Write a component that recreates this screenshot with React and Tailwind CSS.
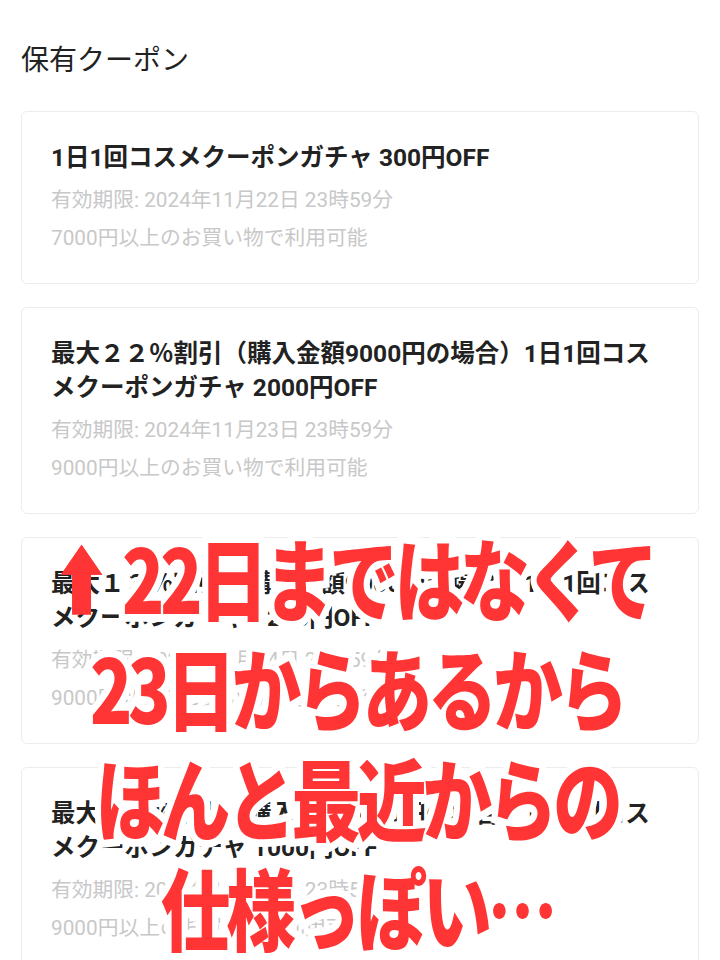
import React from 'react';

const coupons = [
  {
    title: '1日1回コスメクーポンガチャ 300円OFF',
    limit: '有効期限: 2024年11月22日 23時59分',
    cond: '7000円以上のお買い物で利用可能',
  },
  {
    title: '最大２２％割引（購入金額9000円の場合）1日1回コスメクーポンガチャ 2000円OFF',
    limit: '有効期限: 2024年11月23日 23時59分',
    cond: '9000円以上のお買い物で利用可能',
  },
  {
    title: '最大１３％割引（購入金額9000円の場合）1日1回コスメクーポンガチャ 1200円OFF',
    limit: '有効期限: 2024年11月24日 23時59分',
    cond: '9000円以上のお買い物で利用可能',
  },
  {
    title: '最大１１％割引（購入金額9000円の場合）1日1回コスメクーポンガチャ 1000円OFF',
    limit: '有効期限: 2024年11月25日 23時59分',
    cond: '9000円以上のお買い物で利用可能',
  },
];

const CouponCard = ({ title, limit, cond }) => (
  <div className="rounded-[6px] border border-[#ececec] bg-white px-[29px] pt-[29px] pb-[26px]">
    <p className="text-[24.5px] leading-[34px] font-bold text-[#222]">{title}</p>
    <p className="mt-[6px] text-[20.75px] leading-[38px] text-[#c8c8c8]">{limit}</p>
    <p className="text-[20.75px] leading-[38px] text-[#c8c8c8]">{cond}</p>
  </div>
);

// red caption with white outline: outline layer underneath, fill layer on top
const Caption = ({ children }) => (
  <div className="grid scale-x-[0.94] scale-y-[1.2]">
    <div className="[grid-area:1/1] text-white [-webkit-text-stroke:13px_white]">{children}</div>
    <div aria-hidden="true" className="[grid-area:1/1] text-[#ff3535]">{children}</div>
  </div>
);

const UpArrow = () => (
  <svg width="46" height="60" viewBox="0 0 46 60" className="inline-block align-baseline mr-[20px] -mb-[1px]">
    <path d="M23 1 L45 26 L33 26 L33 59 L13 59 L13 26 L1 26 Z" fill="#ff3535" />
  </svg>
);

export default function App() {
  return (
    <div className="relative min-h-screen bg-white px-[21px] pt-[41px] font-['Roboto','Noto_Sans_CJK_JP',sans-serif]">
      <h1 className="text-[28px] leading-[40px] text-[#222] mb-[30px]">保有クーポン</h1>

      <div className="flex flex-col gap-[23px]">
        {coupons.map((c) => (
          <CouponCard key={c.limit} {...c} />
        ))}
      </div>

      {/* annotation overlay */}
      <div className="absolute left-0 right-0 top-[521px] pr-[6px] text-center font-['Noto_Sans_CJK_JP',sans-serif] font-black text-[74px] leading-[110px] tracking-[-0.06em]">
        <Caption>
          <UpArrow />
          22日まではなくて
        </Caption>
        <Caption>23日からあるから</Caption>
        <Caption>ほんと最近からの</Caption>
        <Caption>仕様っぽい…</Caption>
      </div>
    </div>
  );
}
